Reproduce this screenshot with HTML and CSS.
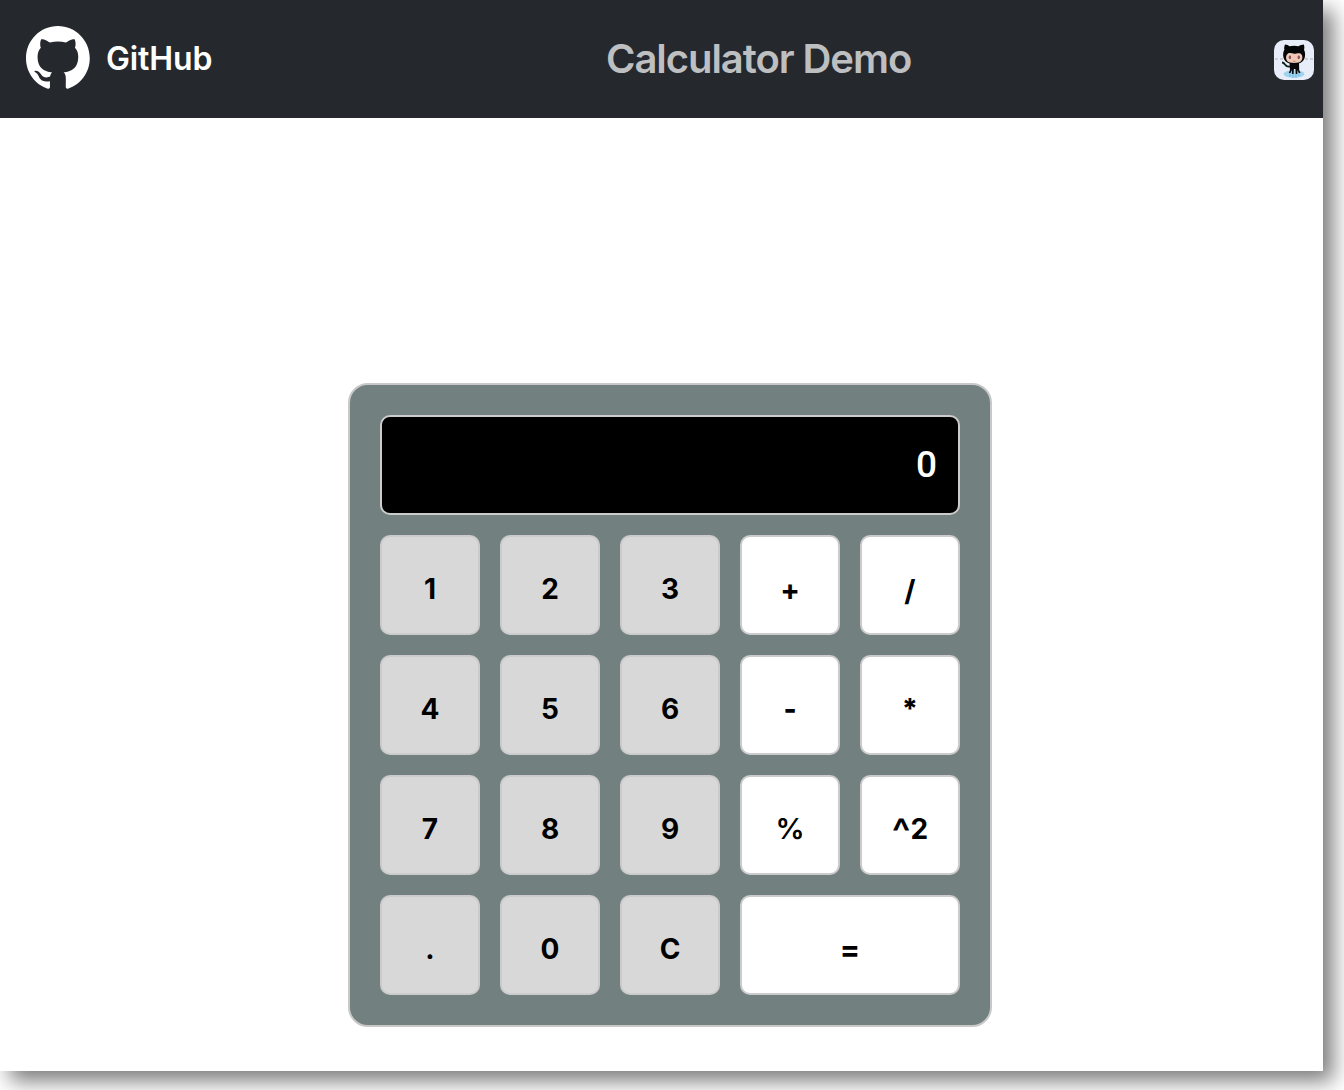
FILE: index.html
```html
<!DOCTYPE html>
<html lang="en">
<head>
<meta charset="utf-8">
<title>Calculator Demo</title>
<link rel="stylesheet" href="styles.css">
</head>
<body>
<div class="window">
  <header class="header">
    <div class="brand">
      <svg class="logo" viewBox="0 0 98 98" aria-hidden="true"><path fill="#fff" fill-rule="evenodd" d="M48.854 0C21.839 0 0 22 0 49.217c0 21.756 13.993 40.172 33.405 46.69 2.427.49 3.316-1.059 3.316-2.362 0-1.141-.08-5.052-.08-9.127-13.59 2.934-16.42-5.867-16.42-5.867-2.184-5.704-5.42-7.17-5.42-7.17-4.448-3.015.324-3.015.324-3.015 4.934.326 7.523 5.052 7.523 5.052 4.367 7.496 11.404 5.378 14.235 4.074.404-3.178 1.699-5.378 3.074-6.6-10.839-1.141-22.243-5.378-22.243-24.283 0-5.378 1.94-9.778 5.014-13.2-.485-1.222-2.184-6.275.486-13.038 0 0 4.125-1.304 13.426 5.052a46.97 46.97 0 0 1 12.214-1.63c4.125 0 8.33.571 12.213 1.63 9.302-6.356 13.427-5.052 13.427-5.052 2.67 6.763.97 11.816.485 13.038 3.155 3.422 5.015 7.822 5.015 13.2 0 18.905-11.404 23.06-22.324 24.283 1.78 1.548 3.316 4.481 3.316 9.126 0 6.6-.08 11.897-.08 13.526 0 1.304.89 2.853 3.316 2.364 19.412-6.52 33.405-24.935 33.405-46.691C97.707 22 75.788 0 48.854 0z"/></svg>
      <span class="brand-name">GitHub</span>
    </div>
    <h1 class="title">Calculator Demo</h1>
    <svg class="avatar" viewBox="0 0 40 40" role="img" aria-label="Octocat">
      <rect width="40" height="40" rx="10" fill="#e8eef9"/>
      <path d="M1 19h3M6 19h3M31 19h3M36 19h3" stroke="#a9adb8" stroke-width="1"/>
      <ellipse cx="20" cy="34" rx="10.5" ry="3.8" fill="#9fd3ee"/>
      <path d="M16 33v4M19 33v5M22 33v5M25 33v3" stroke="#70b9e3" stroke-width="1"/>
      <path d="M8 22.5c4 0 2 5 8 4" fill="none" stroke="#142020" stroke-width="1.800"/>
      <path d="M15.500 23h9.500l.2 7 1.300 3h-1.700l-1.300-3-.2 4h-1.500l-.4-5h-1.500l-.4 5H18l-.2-4-1.300 3h-1.700l1.200-3z" fill="#08090b"/>
      <path d="M11 4.500c2 0 3.500 1 4.600 1.800a20 20 0 0 1 9 0C26 5.200 28 4.500 29.800 4.500c.8 2 .6 4 .2 5.200 1 1.800 1.300 4 1 6.300-.6 5.500-4.500 8-10.800 8S9.800 21.500 9.200 16c-.2-2.500.2-4.700 1.200-6.300-.4-1.200-.3-3.200.6-5.200z" fill="#050607"/>
      <path d="M14 13.500c2-1 4 .3 6.200.3s4.500-1.200 6.300-.3c3 2 2.500 8-2 9-2.600.6-6.200.6-8.700 0-4.400-1-4.800-7-1.800-9z" fill="#efc9b5"/>
      <ellipse cx="15.700" cy="17" rx="2" ry="2.700" fill="#f3dcd2"/><ellipse cx="25" cy="17" rx="2" ry="2.700" fill="#f3dcd2"/>
      <ellipse cx="15.900" cy="17.200" rx="1.300" ry="2" fill="#99515a"/><ellipse cx="24.800" cy="17.200" rx="1.300" ry="2" fill="#99515a"/>
      <path d="M19 21.300h2.500" stroke="#a76c5b" stroke-width=".7"/>
    </svg>
  </header>
  <main class="main">
    <div class="calculator">
      <output class="display">0</output>
      <button class="key">1</button><button class="key">2</button><button class="key">3</button><button class="key op plus">+</button><button class="key op slash">/</button>
      <button class="key">4</button><button class="key">5</button><button class="key">6</button><button class="key op heavy">-</button><button class="key op heavy">*</button>
      <button class="key">7</button><button class="key">8</button><button class="key">9</button><button class="key op percent">%</button><button class="key op"><span class="caret">^</span>2</button>
      <button class="key">.</button><button class="key">0</button><button class="key">C</button><button class="key op equals">=</button>
    </div>
  </main>
</div>
</body>
</html>
```
FILE: styles.css
```css
* { box-sizing: border-box; }
body { margin: 0; height: 1090px; overflow: hidden; background: #fff; font-family: Inter, sans-serif; }
.window { width: 1323px; height: 1071px; background: #fff; box-shadow: 10px 10px 20px rgba(0, 0, 0, .52); }
.header { height: 118px; padding: 0 9px 0 26px; display: grid; grid-template-columns: 580px 1fr 40px; align-items: center; background: #25292e; }
.brand { display: flex; align-items: center; gap: 16px; color: #fff; }
.logo { width: 64px; height: 64px; margin-bottom: 2px; }
.brand-name { padding-bottom: 1px; font-size: 32px; font-weight: 600; line-height: 40px; letter-spacing: -.15px; }
.title { margin: 0; padding-bottom: 1px; font-size: 40px; font-weight: 600; line-height: 50px; letter-spacing: -1.06px; color: #bebfc0; }
.avatar { width: 40px; height: 40px; margin-top: 2px; }
.main { display: flex; padding: 265px 0 0 348px; }
.calculator { width: 644px; height: 644px; padding: 30px; display: grid; grid-template-columns: repeat(5, 100px); grid-auto-rows: 100px; gap: 20px; background: #738080; border: 2px solid #c8c8c8; border-radius: 20px; }
.display { grid-column: 1 / -1; display: flex; align-items: center; justify-content: flex-end; padding: 0 21px 2px; background: #000; color: #fff; border: 2px solid #ccc; border-radius: 10px; font-family: Roboto, sans-serif; font-size: 37px; font-weight: 500; }
.key { padding: 8px 0 0; border: 2px solid #cbcbcb; border-radius: 10px; background: #d8d8d8; color: #000; font-family: inherit; font-size: 28px; font-weight: 700; }
.op { background: #fff; }
.plus { font-size: 29px; }
.slash { font-size: 29px; padding-top: 10px; }
.heavy { font-weight: 800; }
.percent { font-size: 29px; font-weight: 600; padding-top: 7px; }
.caret { font-size: 39px; font-weight: 600; line-height: 0; vertical-align: -7px; }
.equals { grid-column: span 2; font-size: 30px; padding-top: 7px; }
```
